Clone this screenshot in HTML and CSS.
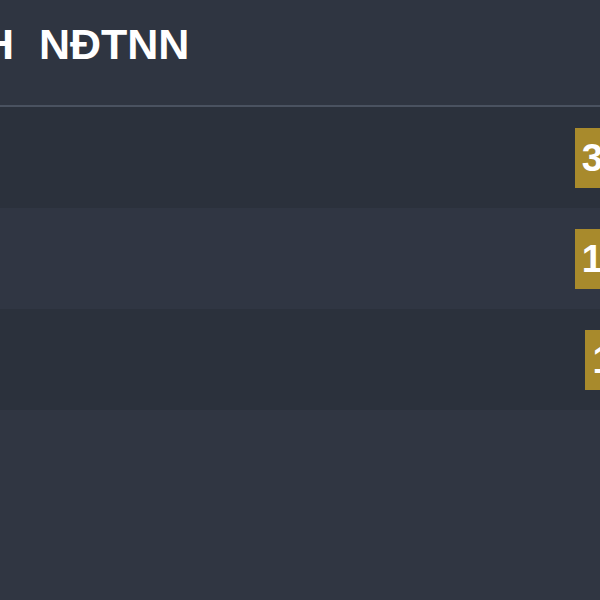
FILE: index.html
```html
<!DOCTYPE html>
<html lang="vi">
<head>
    <meta charset="UTF-8">
    <meta name="viewport" content="width=device-width, initial-scale=1.0">
    <title>Danh sách NĐTNN</title>
    <link rel="stylesheet" href="styles.css">
</head>
<body>
    <div class="board">
        <header class="board-header">
            <h1>DANH SÁCH NĐTNN</h1>
        </header>

        <div class="rows">
            <div class="row">
                <div class="name"></div>
                <div class="count"><span class="badge">36</span></div>
            </div>
            <div class="row">
                <div class="name"></div>
                <div class="count"><span class="badge">14</span></div>
            </div>
            <div class="row">
                <div class="name"></div>
                <div class="count"><span class="badge">1</span></div>
            </div>
        </div>
    </div>
</body>
</html>
```

FILE: styles.css
```css
html, body {
    margin: 0;
    overflow: hidden;
}

body {
    background: #303642;
    font-family: "Liberation Sans", Arial, sans-serif;
    color: white;
}

.board {
    width: 643px;
}

.board-header {
    height: 105px;
    background: #2f3541;
    border-bottom: 2px solid #4a5260;
    overflow: hidden;
}

.board-header h1 {
    margin: 0 0 0 -257px;
    padding-top: 22px;
    font-size: 43px;
    line-height: 44px;
    font-weight: bold;
    word-spacing: 13px;
    white-space: nowrap;
}

.row {
    display: grid;
    grid-template-columns: 1fr 80px;
    align-items: center;
    height: 101px;
    background: #2b313c;
}

.row:nth-child(2) {
    background: #303643;
}

.count {
    text-align: center;
}

.badge {
    display: inline-block;
    padding: 0 7px;
    background: #a88a2c;
    font-size: 38px;
    font-weight: bold;
    line-height: 60px;
}
```
